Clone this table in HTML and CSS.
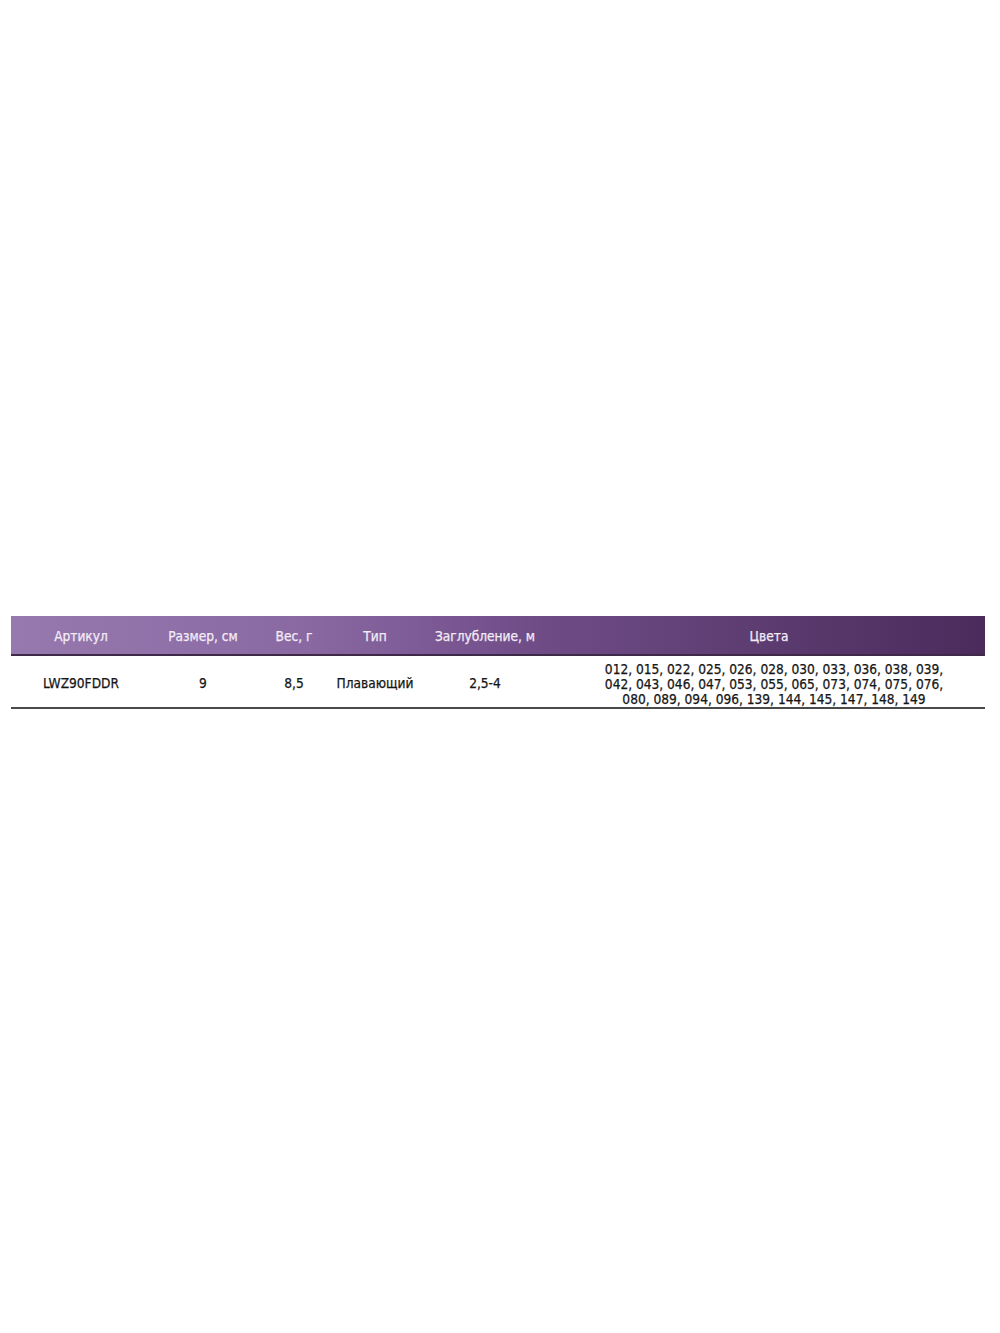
FILE: index.html
```html
<!DOCTYPE html>
<html lang="ru">
<head>
<meta charset="utf-8">
<title>LWZ90FDDR</title>
<link rel="stylesheet" href="styles.css">
</head>
<body>
<div class="page">
  <table class="spec">
    <colgroup>
      <col class="c1"><col class="c2"><col class="c3"><col class="c4"><col class="c5"><col class="c6">
    </colgroup>
    <thead>
      <tr>
        <th>Артикул</th>
        <th>Размер, см</th>
        <th>Вес, г</th>
        <th>Тип</th>
        <th>Заглубление, м</th>
        <th>Цвета</th>
      </tr>
    </thead>
    <tbody>
      <tr>
        <td>LWZ90FDDR</td>
        <td>9</td>
        <td>8,5</td>
        <td>Плавающий</td>
        <td>2,5-4</td>
        <td class="colors">012, 015, 022, 025, 026, 028, 030, 033, 036, 038, 039,<br>042, 043, 046, 047, 053, 055, 065, 073, 074, 075, 076,<br>080, 089, 094, 096, 139, 144, 145, 147, 148, 149</td>
      </tr>
    </tbody>
  </table>
</div>
</body>
</html>
```
FILE: styles.css
```css
html, body {
  margin: 0;
  padding: 0;
  background: #ffffff;
}
.page {
  padding: 616px 15px 0 11px;
}
.spec {
  width: 974px;
  border-collapse: collapse;
  table-layout: fixed;
  font-family: "DejaVu Sans Condensed", "DejaVu Sans", sans-serif;
  font-size: 13.6px;
  color: #161616;
  -webkit-text-stroke: 0.25px currentColor;
}
.c1 { width: 140px; }
.c2 { width: 104px; }
.c3 { width: 78px; }
.c4 { width: 84px; }
.c5 { width: 136px; }
.c6 { width: 432px; }
.spec thead tr {
  background: linear-gradient(to right, #9679ae 0%, #8a69a3 30%, #6f4b86 55%, #5a3a6e 80%, #4b2a5c 100%);
  border-bottom: 2px solid #3e2a48;
}
.spec th {
  height: 37px;
  padding: 1px 0 0;
  font-weight: normal;
  color: #f2ecf6;
  text-align: center;
}
.spec td {
  height: 47px;
  padding: 2px 0 0;
  text-align: center;
  vertical-align: middle;
  border-bottom: 2px solid #4a4a4a;
}
.spec td.colors {
  line-height: 15px;
  padding: 4px 0 0 10px;
  vertical-align: bottom;
}
```
